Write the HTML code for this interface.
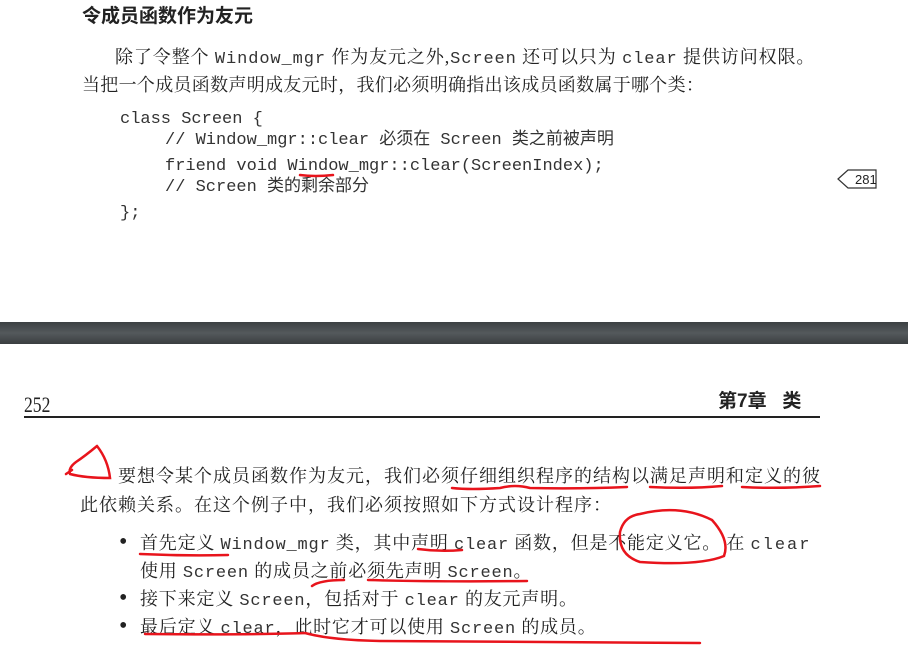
<!DOCTYPE html><html><head><meta charset="utf-8"><style>
body{margin:0;width:908px;height:656px;background:#fff;position:relative;overflow:hidden;font-family:"Liberation Serif","Noto Serif CJK SC",serif;color:#222}
.t{position:absolute;white-space:nowrap;font-size:18px;line-height:22px}
.m{font-family:"Liberation Mono","Noto Sans CJK SC",monospace;font-size:17px;color:#333}
.c{font-family:"Liberation Mono",monospace;font-size:17px;color:#333}
svg{position:absolute;left:0;top:0}
</style></head><body>
<div class="t" style="left:82px;top:5px;font-family:'Liberation Sans','Noto Sans CJK SC',sans-serif;font-weight:bold;font-size:19px;line-height:24px">令成员函数作为友元</div>
<div class="t" style="left:115px;top:46px;letter-spacing:0.9px">除了令整个 <span class="c">Window_mgr</span> 作为友元之外,<span class="c">Screen</span> 还可以只为 <span class="c">clear</span> 提供访问权限。</div>
<div class="t" style="left:82px;top:74px;letter-spacing:0.3px">当把一个成员函数声明成友元时，我们必须明确指出该成员函数属于哪个类：</div>
<div class="t m" style="left:120px;top:109px">class Screen {</div>
<div class="t m" style="left:165px;top:130px">// Window_mgr::clear 必须在 Screen 类之前被声明</div>
<div class="t m" style="left:165px;top:156px">friend void Window_mgr::clear(ScreenIndex);</div>
<div class="t m" style="left:165px;top:177px">// Screen 类的剩余部分</div>
<div class="t m" style="left:120px;top:203px">};</div>
<svg width="908" height="656"><polygon points="838,179 848,170 876,170 876,188 848,188" fill="#fff" stroke="#333" stroke-width="1.2"/><text x="855" y="184" font-family="Liberation Sans" font-size="13" fill="#222">281</text></svg>
<div style="position:absolute;left:0;top:322px;width:908px;height:22px;background:linear-gradient(#3c4043,#54595c 50%,#3a3e40)"></div>
<div class="t" style="left:24px;top:393px;font-size:22px;line-height:24px;transform:scaleX(.8);transform-origin:left">252</div>
<div class="t" style="left:718px;top:390px;font-size:19px;line-height:24px;font-family:'Liberation Sans','Noto Sans CJK SC',sans-serif;font-weight:bold">第7章&nbsp;&nbsp;&nbsp;类</div>
<div style="position:absolute;left:24px;top:416px;width:796px;height:2px;background:#222"></div>
<div class="t" style="left:118px;top:465px;font-size:18px;letter-spacing:1px">要想令某个成员函数作为友元，我们必须仔细组织程序的结构以满足声明和定义的彼</div>
<div class="t" style="left:80px;top:494px;font-size:18px;letter-spacing:1px">此依赖关系。在这个例子中，我们必须按照如下方式设计程序：</div>
<div class="t" style="left:119px;top:531px;font-size:24px">•</div>
<div class="t" style="left:119px;top:587px;font-size:24px">•</div>
<div class="t" style="left:119px;top:615px;font-size:24px">•</div>
<div class="t" style="left:140px;top:532px;letter-spacing:.8px">首先定义 <span class="c">Window_mgr</span> 类，其中声明 <span class="c">clear</span> 函数，但是不能定义它。&nbsp;在 <span class="c" style="letter-spacing:2px">clear</span></div>
<div class="t" style="left:140px;top:560px;letter-spacing:.8px">使用 <span class="c">Screen</span> 的成员之前必须先声明 <span class="c">Screen</span>。</div>
<div class="t" style="left:140px;top:588px;letter-spacing:.8px">接下来定义 <span class="c">Screen</span>，包括对于 <span class="c">clear</span> 的友元声明。</div>
<div class="t" style="left:140px;top:616px;letter-spacing:.8px">最后定义 <span class="c">clear</span>，此时它才可以使用 <span class="c">Screen</span> 的成员。</div>
<svg width="908" height="656" fill="none" stroke="#e8141c" stroke-width="2.5" stroke-linecap="round">
<path d="M300 175 Q315 177 333 175"/>
<path d="M97 446 Q85 456 76 462 Q68 468 70 474 Q85 478 110 478 Q108 460 97 446 M66 474 L72 470"/>
<path d="M452 488 Q470 490 500 488 Q515 484 530 488 Q580 489 627 487"/>
<path d="M650 487 Q690 489 722 486 M742 487 Q780 489 820 486"/>
<path d="M140 554 Q185 556 228 555 M418 549 Q440 552 462 550"/>
<path d="M640 514 Q680 504 712 520 Q730 540 724 556 Q700 566 640 562 Q618 555 620 532 Q624 516 640 514"/>
<path d="M312 586 Q320 580 344 580 M368 580 Q440 582 527 581"/>
<path d="M145 634 Q250 635 305 633 Q330 640 380 641 Q520 642 700 643"/>
</svg>
</body></html>
